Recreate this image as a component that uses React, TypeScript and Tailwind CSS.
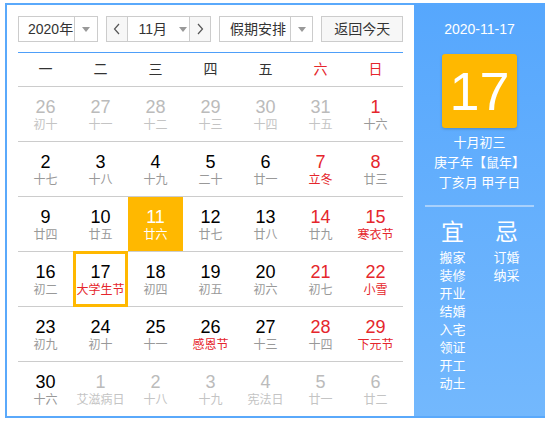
type Day = { n: number; l: string; other?: boolean; red?: boolean; fest?: boolean; today?: boolean; sel?: boolean };

const rows: Day[][] = [
  [
    { n: 26, l: '初十', other: true },
    { n: 27, l: '十一', other: true },
    { n: 28, l: '十二', other: true },
    { n: 29, l: '十三', other: true },
    { n: 30, l: '十四', other: true },
    { n: 31, l: '十五', other: true },
    { n: 1, l: '十六', red: true },
  ],
  [
    { n: 2, l: '十七' },
    { n: 3, l: '十八' },
    { n: 4, l: '十九' },
    { n: 5, l: '二十' },
    { n: 6, l: '廿一' },
    { n: 7, l: '立冬', red: true, fest: true },
    { n: 8, l: '廿三', red: true },
  ],
  [
    { n: 9, l: '廿四' },
    { n: 10, l: '廿五' },
    { n: 11, l: '廿六', today: true },
    { n: 12, l: '廿七' },
    { n: 13, l: '廿八' },
    { n: 14, l: '廿九', red: true },
    { n: 15, l: '寒衣节', red: true, fest: true },
  ],
  [
    { n: 16, l: '初二' },
    { n: 17, l: '大学生节', fest: true, sel: true },
    { n: 18, l: '初四' },
    { n: 19, l: '初五' },
    { n: 20, l: '初六' },
    { n: 21, l: '初七', red: true },
    { n: 22, l: '小雪', red: true, fest: true },
  ],
  [
    { n: 23, l: '初九' },
    { n: 24, l: '初十' },
    { n: 25, l: '十一' },
    { n: 26, l: '感恩节', fest: true },
    { n: 27, l: '十三' },
    { n: 28, l: '十四', red: true },
    { n: 29, l: '下元节', red: true, fest: true },
  ],
  [
    { n: 30, l: '十六' },
    { n: 1, l: '艾滋病日', other: true },
    { n: 2, l: '十八', other: true },
    { n: 3, l: '十九', other: true },
    { n: 4, l: '宪法日', other: true },
    { n: 5, l: '廿一', other: true },
    { n: 6, l: '廿二', other: true },
  ],
];

const weekdays = ['一', '二', '三', '四', '五', '六', '日'];
const yi = ['搬家', '装修', '开业', '结婚', '入宅', '领证', '开工', '动土'];
const ji = ['订婚', '纳采'];

function Caret() {
  return <span className="block w-0 h-0 border-l-[4px] border-r-[4px] border-t-[5px] border-l-transparent border-r-transparent border-t-[#999]" />;
}

function Chevron({ dir }: { dir: 'l' | 'r' }) {
  return (
    <svg width="8" height="12" viewBox="0 0 8 12" fill="none" stroke="#555" strokeWidth="1.2">
      {dir === 'l' ? <polyline points="6,1 1.5,6 6,11" /> : <polyline points="2,1 6.5,6 2,11" />}
    </svg>
  );
}

function Cell({ d }: { d: Day }) {
  let num = 'text-black';
  let lun = 'text-[#999]';
  if (d.red) num = 'text-[#e5262c]';
  if (d.fest) lun = 'text-[#e5262c]';
  if (d.other) {
    num = 'text-[#bbb]';
    lun = 'text-[#c4c4c4]';
  }
  if (d.today) {
    num = 'text-white';
    lun = 'text-white';
  }
  return (
    <div className={`relative h-[54px] flex flex-col items-center pt-[9px] ${d.today ? 'bg-[#ffb800]' : ''}`}>
      <span className={`text-[18px] leading-[22px] ${num}`}>{d.n}</span>
      <span className={`text-[12px] leading-[14px] whitespace-nowrap ${lun}`}>{d.l}</span>
      {d.sel && <div className="absolute left-0 right-0 top-[-1px] bottom-[-1px] border-[3px] border-[#ffb800]" />}
    </div>
  );
}

export default function App() {
  return (
    <div className="w-[548px] h-[424px] bg-white pt-[3px] pl-[5px]" style={{ fontFamily: '"Liberation Sans", "Noto Sans CJK SC", sans-serif' }}>
      <div className="w-[540px] h-[415px] border-2 border-[#5aa9fb] flex">
        <div className="w-[407px] px-[11px] pt-[11px]">
          <div className="flex items-center gap-[8px] h-[26px] text-[14px] text-[#333] whitespace-nowrap">
            <div className="w-[80px] h-[26px] border border-[#ccc] flex">
              <span className="w-[55px] flex items-center pl-[9px] whitespace-nowrap">2020年</span>
              <span className="flex-1 border-l border-[#ccc] flex items-center justify-center"><Caret /></span>
            </div>
            <div className="w-[106px] h-[26px] border border-[#ccc] flex">
              <span className="w-[21px] bg-[#f7f7f7] flex items-center justify-center border-r border-[#ccc]"><Chevron dir="l" /></span>
              <span className="flex-1 flex items-center pl-[11px] gap-[12px]">11月<Caret /></span>
              <span className="w-[21px] bg-[#f7f7f7] flex items-center justify-center border-l border-[#ccc]"><Chevron dir="r" /></span>
            </div>
            <div className="w-[95px] h-[26px] border border-[#ccc] flex">
              <span className="w-[70px] flex items-center pl-[10px]">假期安排</span>
              <span className="flex-1 border-l border-[#ccc] flex items-center justify-center"><Caret /></span>
            </div>
            <div className="w-[82px] h-[26px] border border-[#ccc] bg-[#f7f7f7] flex items-center justify-center">返回今天</div>
          </div>
          <div className="mt-[10px] border-t border-[#4e9ff9]">
            <div className="grid grid-cols-7 h-[34px] border-b border-[#ccc] text-[14px] items-center">
              {weekdays.map((w, i) => (
                <span key={w} className={`text-center ${i >= 5 ? 'text-[#e5262c]' : 'text-[#333]'}`}>{w}</span>
              ))}
            </div>
            {rows.map((r, ri) => (
              <div key={ri} className={`grid grid-cols-7 ${ri > 0 ? 'border-t border-[#ccc]' : ''}`}>
                {r.map((d, di) => <Cell key={di} d={d} />)}
              </div>
            ))}
          </div>
        </div>
        <div className="flex-1 -mt-[2px] -mr-[2px] bg-gradient-to-b from-[#56a7fd] to-[#73b8fd] flex flex-col items-center text-white">
          <div className="mt-[18px] text-[14px] leading-[16px]">2020-11-17</div>
          <div className="mt-[17px] w-[75px] h-[74px] rounded-[3px] bg-[#ffb800] shadow-[0_1px_3px_rgba(0,0,0,0.2)] flex items-center justify-center text-[54px] leading-none">17</div>
          <div className="mt-[5px] text-[13px] leading-[20px] text-center">
            <div>十月初三</div>
            <div>庚子年【鼠年】</div>
            <div>丁亥月 甲子日</div>
          </div>
          <div className="mt-[12px] w-[109px] h-[2px] bg-[#a9d1fc]" />
          <div className="mt-[11px] flex">
            <div className="w-[54px] flex flex-col items-center">
              <span className="text-[23px] leading-[28px]">宜</span>
              <div className="mt-[3px] flex flex-col items-center text-[13px] leading-[18px]">
                {yi.map((t) => <span key={t}>{t}</span>)}
              </div>
            </div>
            <div className="w-[54px] flex flex-col items-center">
              <span className="text-[23px] leading-[28px]">忌</span>
              <div className="mt-[3px] flex flex-col items-center text-[13px] leading-[18px]">
                {ji.map((t) => <span key={t}>{t}</span>)}
              </div>
            </div>
          </div>
        </div>
      </div>
    </div>
  );
}
